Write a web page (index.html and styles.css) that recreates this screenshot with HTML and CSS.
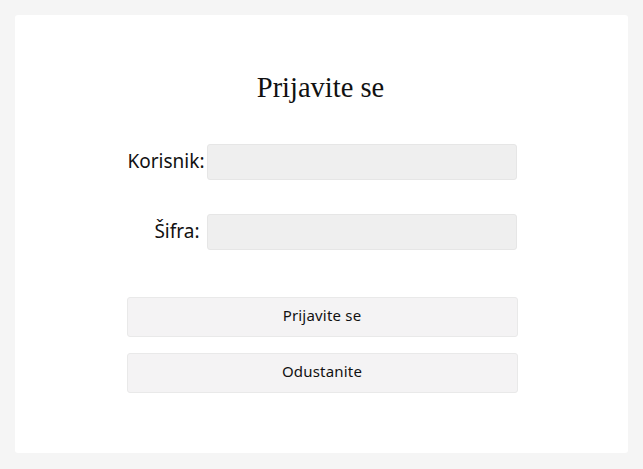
FILE: index.html
```html
<!DOCTYPE html>
<html lang="hr">
<head>
<meta charset="utf-8">
<title>Prijava</title>
<link rel="stylesheet" href="styles.css">
</head>
<body>
<main class="card">
  <h1 class="title">Prijavite se</h1>
  <form class="form">
    <div class="row">
      <label class="label" for="user">Korisnik:</label>
      <input class="input" id="user" type="text">
    </div>
    <div class="row row-pass">
      <label class="label label-pass" for="pass">Šifra:</label>
      <input class="input" id="pass" type="password">
    </div>
    <div class="actions">
      <button class="btn" type="button">Prijavite se</button>
      <button class="btn" type="button">Odustanite</button>
    </div>
  </form>
</main>
</body>
</html>
```
FILE: styles.css
```css
html, body { margin: 0; padding: 0; }
body {
  background: #f5f5f5;
  width: 643px;
  height: 469px;
  padding: 15px;
  box-sizing: border-box;
}
.card {
  background: #fff;
  border-radius: 3px;
  width: 613px;
  height: 438px;
  box-sizing: border-box;
  padding-top: 55px;
  display: flex;
  flex-direction: column;
  align-items: center;
}
.title {
  margin: 0 0 0 -2px;
  font-family: "Liberation Serif", serif;
  font-weight: normal;
  font-size: 28.5px;
  line-height: 36px;
  color: #111;
  height: 36px;
}
.form {
  margin-top: 38px;
  width: 391px;
  margin-left: 1px;
  display: flex;
  flex-direction: column;
}
.row {
  display: flex;
  align-items: center;
  justify-content: flex-end;
  height: 36px;
  padding-right: 1px;
}
.row-pass { margin-top: 34px; }
.label {
  font-family: "Noto Sans", sans-serif;
  font-size: 19px;
  color: #111;
  margin-right: 2px;
  padding-bottom: 2px;
}
.label-pass { margin-right: 7px; }
.input {
  width: 310px;
  height: 36px;
  box-sizing: border-box;
  border: 1px solid #e6e6e6;
  border-radius: 3px;
  background: #efefef;
  margin: 0;
  padding: 0 8px;
}
.actions {
  margin-top: 47px;
  display: flex;
  flex-direction: column;
  gap: 16px;
}
.btn {
  width: 391px;
  height: 40px;
  box-sizing: border-box;
  border: 1px solid #e9e9e9;
  border-radius: 3px;
  background: #f4f3f4;
  font-family: "Noto Sans", sans-serif;
  font-size: 15px;
  letter-spacing: 0.2px;
  color: #111;
  margin: 0;
  padding: 0 0 4px;
}
```
